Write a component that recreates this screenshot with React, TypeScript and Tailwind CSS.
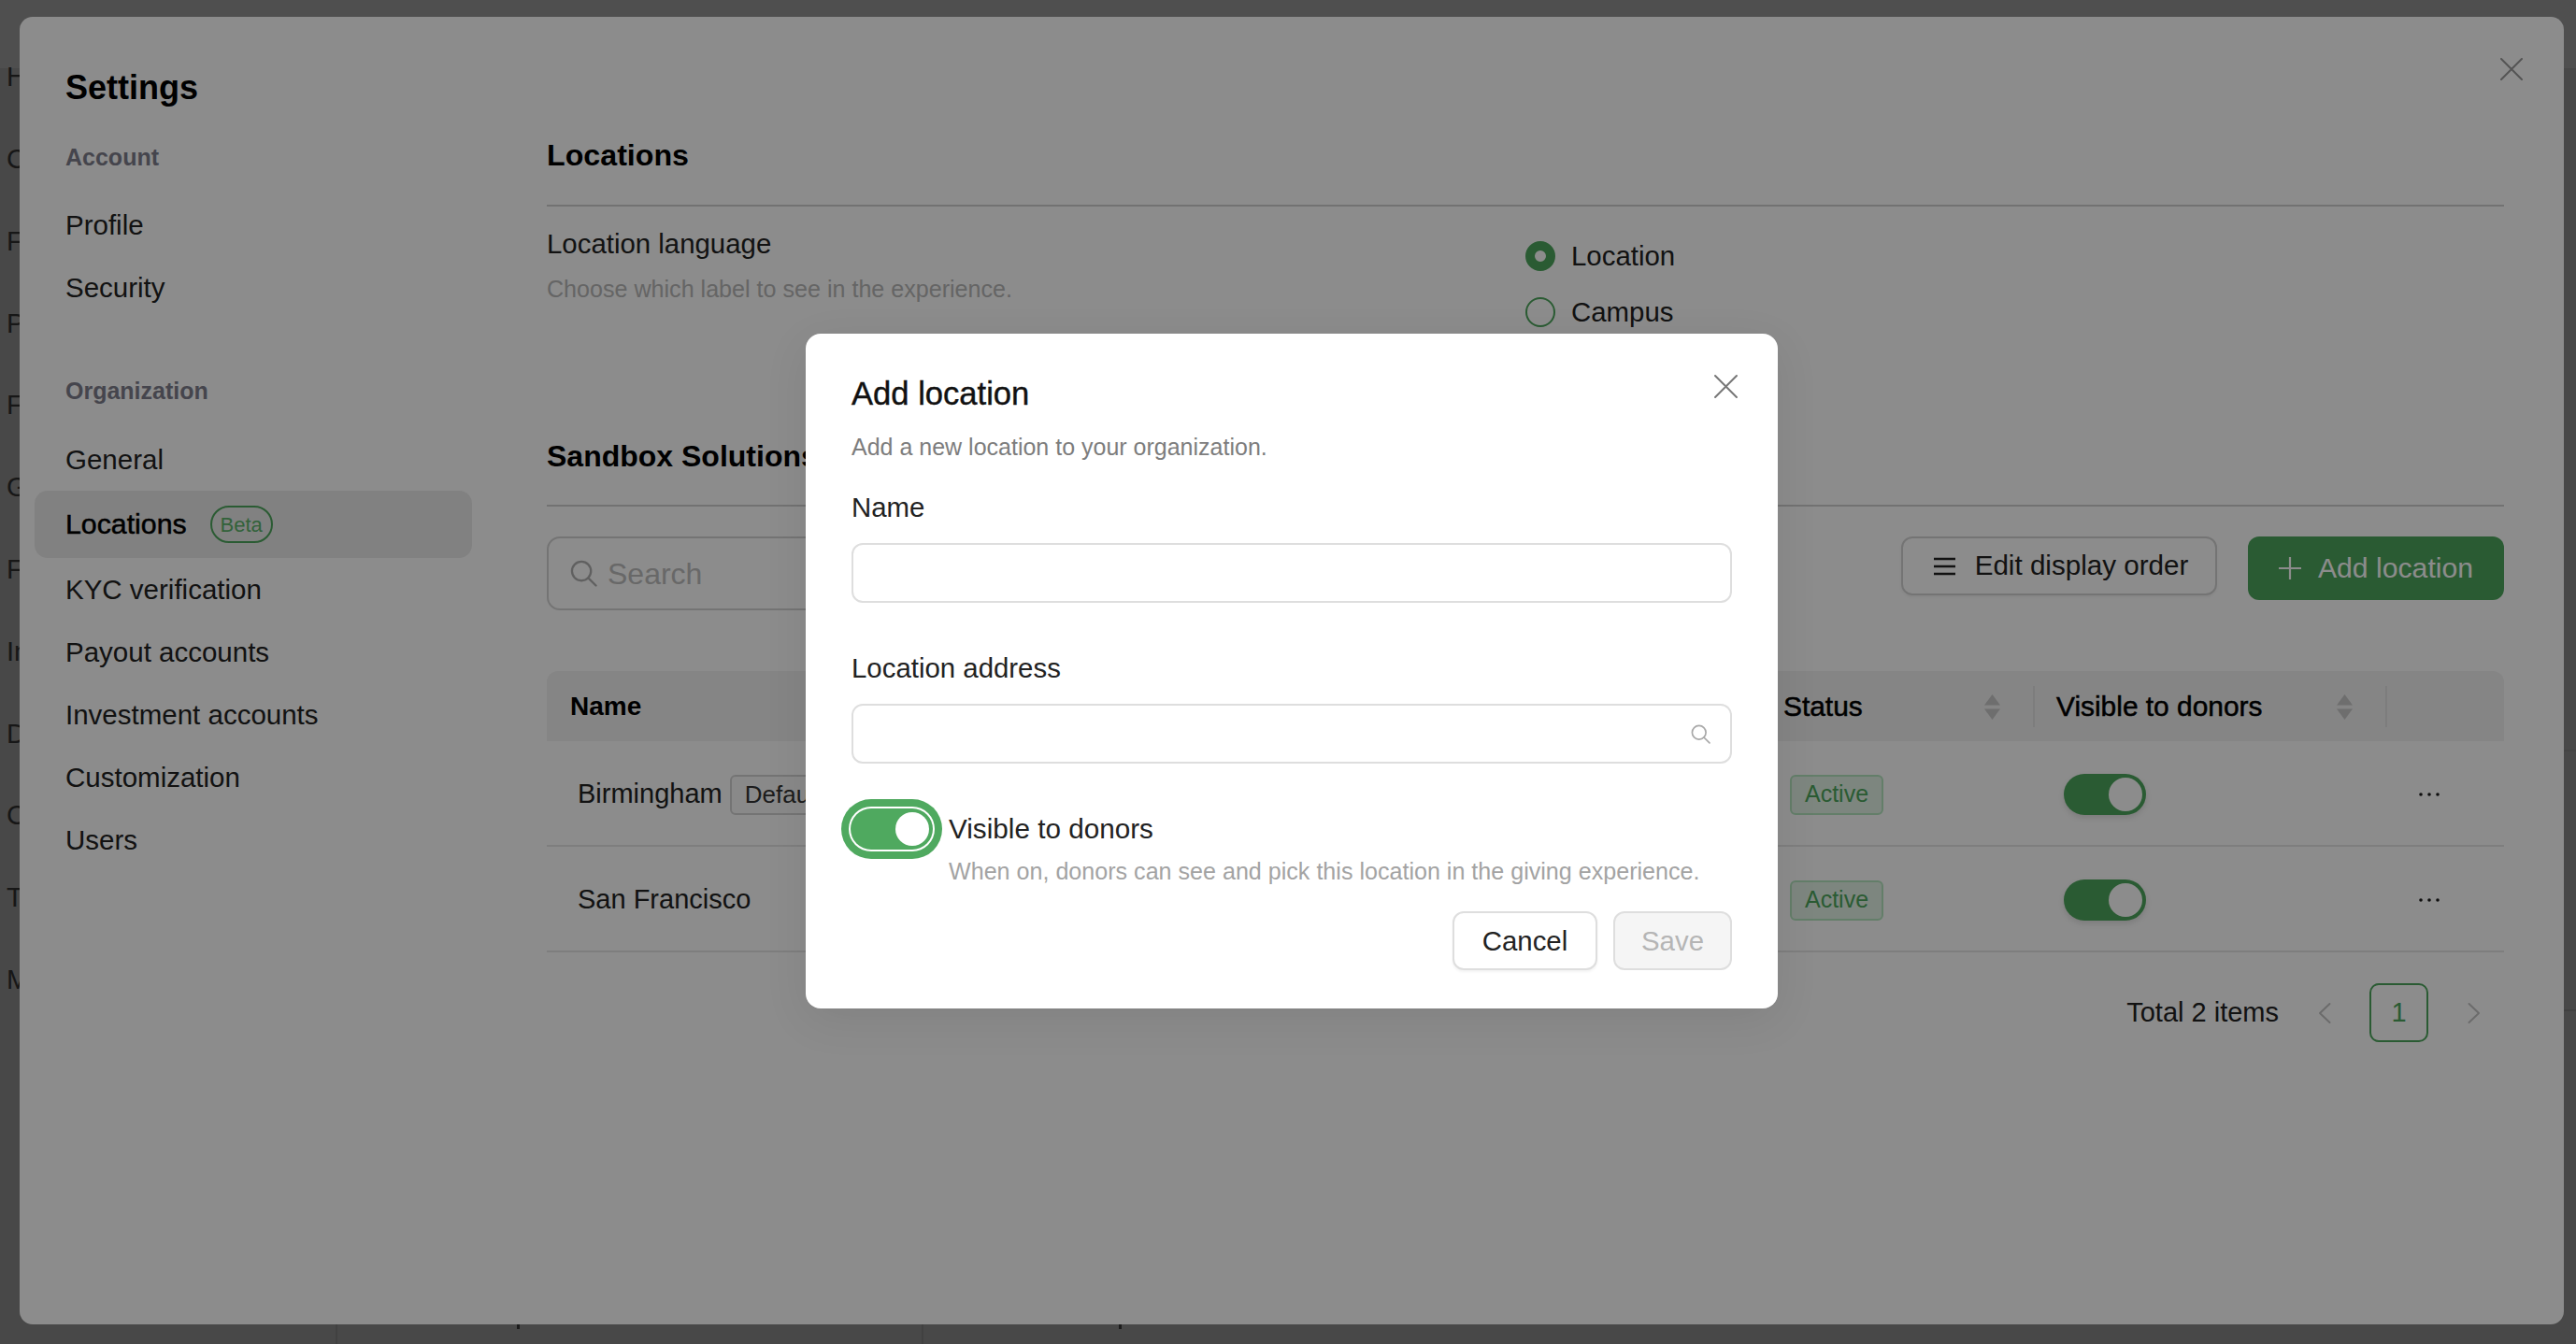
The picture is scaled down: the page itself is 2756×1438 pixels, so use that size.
import React from "react";

const F = "font-['Liberation_Sans',sans-serif]";

function Toggle() {
  return (
    <div className="flex h-[44px] w-[88px] items-center justify-end rounded-full bg-[#4ea75d] pr-[4px] shadow-[0_3px_6px_rgba(0,0,0,0.12)]">
      <div className="h-[36px] w-[36px] rounded-full bg-white" />
    </div>
  );
}

function Sort() {
  return (
    <svg width="17" height="27" viewBox="0 0 17 27" className="shrink-0">
      <path d="M8.5 0 L17 11.5 H0 Z" fill="#c8c8c8" />
      <path d="M8.5 27 L17 15.5 H0 Z" fill="#c8c8c8" />
    </svg>
  );
}

function SearchIcon({ size, color, sw }: { size: number; color: string; sw: number }) {
  return (
    <svg width={size} height={size} viewBox="0 0 30 30" fill="none" stroke={color} strokeWidth={sw} strokeLinecap="round">
      <circle cx="12.5" cy="12.5" r="10.5" />
      <path d="M20 20 L28.5 28.5" />
    </svg>
  );
}

function Cross({ size, color, sw }: { size: number; color: string; sw: number }) {
  return (
    <svg width={size} height={size} viewBox="0 0 24 24" fill="none" stroke={color} strokeWidth={sw} strokeLinecap="round">
      <path d="M1 1 L23 23 M23 1 L1 23" />
    </svg>
  );
}

function Dots() {
  return (
    <svg width="22" height="4" viewBox="0 0 22 4" fill="#1a1a1a">
      <circle cx="2" cy="2" r="1.8" />
      <circle cx="11" cy="2" r="1.8" />
      <circle cx="20" cy="2" r="1.8" />
    </svg>
  );
}

function Chevron({ dir }: { dir: "l" | "r" }) {
  return (
    <svg width="14" height="24" viewBox="0 0 14 24" fill="none" stroke="#c4c4c4" strokeWidth="2" strokeLinecap="round" strokeLinejoin="round">
      <path d={dir === "l" ? "M12.5 2 L2 12 L12.5 22" : "M1.5 2 L12 12 L1.5 22"} />
    </svg>
  );
}

const leftLetters = ["H", "C", "F", "P", "F", "G", "F", "In", "D", "C", "T", "M"];

function NavItem({ label, mt }: { label: string; mt: string }) {
  return <div className={`flex h-[40px] items-center text-[29.5px] text-[#222] ${mt}`}>{label}</div>;
}

function HeadCell({ label }: { label: string }) {
  return (
    <div className="flex h-full items-center justify-between pr-[35px]">
      <div className="flex items-center">
        <div className="h-[44px] w-[2px] bg-[#e4e4e4]" />
        <span className="ml-[23px] text-[29.9px] text-black [-webkit-text-stroke:0.5px_black]">{label}</span>
      </div>
      <Sort />
    </div>
  );
}

function Row({ name, tag }: { name: string; tag?: boolean }) {
  return (
    <div className="grid h-[113px] grid-cols-[1298px_292px_377px_127px] items-center border-b-2 border-[#e6e6e6] pt-[3px]">
      <div className="flex items-center pl-[33px] text-[29px] text-[#222]">
        <span>{name}</span>
        {tag && (
          <span className="ml-[8px] flex h-[43px] items-center rounded-[6px] border-2 border-[#d4d4d4] bg-[#fafafa] px-[14px] text-[26px] text-[#333]">
            Default
          </span>
        )}
      </div>
      <div className="pl-[32px]">
        <span className="flex h-[43px] w-[100px] items-center justify-center rounded-[6px] border-2 border-[#b4e6bf] bg-[#e4f5e7] text-[25px] text-[#4ea75d]">
          Active
        </span>
      </div>
      <div className="pl-[33px]">
        <Toggle />
      </div>
      <div className="flex justify-start pl-[36px]">
        <Dots />
      </div>
    </div>
  );
}

export default function App() {
  return (
    <div className={`relative h-[1438px] w-[2756px] overflow-hidden bg-[#838383] ${F}`}>
      {/* page behind */}
      <div className="absolute left-0 right-0 top-0 h-[73px] bg-[#909090]" />
      <div className="relative flex flex-col pl-[7px] pt-[39px]">
        {leftLetters.map((l, i) => (
          <div key={i} className="flex h-[87.8px] items-center text-[29px] text-[#2a2a2a]">
            {l}
          </div>
        ))}
      </div>
      <div className="absolute bottom-0 left-[359px] h-[21px] w-[2px] bg-[#777]" />
      <div className="absolute bottom-[16px] left-[553px] h-[5px] w-[3px] bg-[#333]" />
      <div className="absolute bottom-0 left-[986px] h-[21px] w-[2px] bg-[#777]" />
      <div className="absolute bottom-[16px] left-[1197px] h-[5px] w-[3px] bg-[#333]" />
      <div className="absolute left-[2743px] right-0 top-[1080px] h-[2px] bg-[#757575]" />
      <div className="absolute left-[2743px] right-0 top-[802px] h-[2px] bg-[#7c7c7c]" />

      {/* settings modal */}
      <div className="absolute left-[21px] top-[18px] flex h-[1399px] w-[2722px] rounded-[14px] bg-white">
        <div className="absolute right-[44px] top-[44px]">
          <Cross size={24} color="#9a9a9a" sw={2} />
        </div>
        {/* sidebar */}
        <div className="w-[564px] shrink-0 pl-[49px] pt-[53px]">
          <div className="flex h-[44px] items-center pt-[1px] text-[36px] font-bold text-black">Settings</div>
          <div className="mt-[37px] flex h-[34px] items-center text-[25px] font-bold text-[#7e7e8c]">Account</div>
          <NavItem label="Profile" mt="mt-[35px]" />
          <NavItem label="Security" mt="mt-[27px]" />
          <div className="mt-[74px] flex h-[34px] items-center text-[25px] font-bold text-[#7e7e8c]">Organization</div>
          <NavItem label="General" mt="mt-[36px]" />
          <div className="-ml-[33px] mt-[13px] flex h-[72px] w-[468px] items-center rounded-[14px] bg-[#ebebeb] pl-[33px]">
            <span className="text-[30.3px] text-black [-webkit-text-stroke:0.5px_black]">Locations</span>
            <span className="ml-[25px] flex h-[40px] w-[67px] items-center justify-center rounded-full border-2 border-[#4ea75d] text-[22px] text-[#5cb36b]">
              Beta
            </span>
          </div>
          <NavItem label="KYC verification" mt="mt-[14px]" />
          <NavItem label="Payout accounts" mt="mt-[27px]" />
          <NavItem label="Investment accounts" mt="mt-[27px]" />
          <NavItem label="Customization" mt="mt-[27px]" />
          <NavItem label="Users" mt="mt-[27px]" />
        </div>
        {/* main */}
        <div className="w-[2094px] shrink-0 pt-[128px]">
          <div className="flex h-[40px] items-center text-[32.2px] font-bold text-black">Locations</div>
          <div className="mt-[33px] h-[2px] bg-[#cfcfcf]" />
          <div className="flex h-[247px]">
            <div className="w-[1047px] shrink-0 pt-[20px]">
              <div className="flex h-[40px] items-center text-[29.4px] text-[#222]">Location language</div>
              <div className="mt-[12px] flex h-[34px] items-center text-[25.1px] text-[#b8b8b8]">
                Choose which label to see in the experience.
              </div>
            </div>
            <div className="flex flex-col gap-[28px] pt-[37px]">
              <div className="flex h-[32px] items-center">
                <div className="flex h-[32px] w-[32px] items-center justify-center rounded-full border-[10px] border-[#4ea75d] bg-white" />
                <span className="ml-[17px] pt-[1px] text-[29.4px] text-[#222]">Location</span>
              </div>
              <div className="flex h-[32px] items-center">
                <div className="h-[32px] w-[32px] rounded-full border-2 border-[#4ea75d]" />
                <span className="ml-[17px] pt-[1px] text-[29.4px] text-[#222]">Campus</span>
              </div>
            </div>
          </div>
          <div className="flex h-[40px] items-center text-[32px] font-bold text-black">Sandbox Solutions</div>
          <div className="mt-[32px] h-[2px] bg-[#cfcfcf]" />
          <div className="mt-[32px] flex items-start justify-between">
            <div className="flex h-[79px] w-[600px] items-center rounded-[14px] border-2 border-[#d4d4d4] pl-[23px]">
              <SearchIcon size={29} color="#b0b0b0" sw={2.4} />
              <span className="ml-[11px] text-[32px] text-[#bdbdbd]">Search</span>
            </div>
            <div className="flex items-start gap-[33px]">
              <div className="flex h-[63px] w-[338px] items-center justify-center rounded-[12px] border-2 border-[#d4d4d4] pl-[4px] shadow-[0_2px_3px_rgba(0,0,0,0.05)]">
                <svg width="23" height="20" viewBox="0 0 23 20" stroke="#222" strokeWidth="2.4" fill="none">
                  <path d="M0 2 H23 M0 10 H23 M0 18 H23" />
                </svg>
                <span className="ml-[21px] text-[29.6px] text-[#222]">Edit display order</span>
              </div>
              <div className="flex h-[68px] w-[274px] items-center justify-center rounded-[12px] bg-[#4ea75d]">
                <svg width="24" height="24" viewBox="0 0 24 24" stroke="#fff" strokeWidth="2.2" fill="none">
                  <path d="M12 0 V24 M0 12 H24" />
                </svg>
                <span className="ml-[18px] text-[30.2px] text-white">Add location</span>
              </div>
            </div>
          </div>
          {/* table */}
          <div className="mt-[65px] grid h-[75px] grid-cols-[1298px_292px_377px_127px] items-center rounded-t-[12px] bg-[#f2f2f2] pt-[1px]">
            <div className="pl-[25px] text-[28px] font-bold text-black">Name</div>
            <HeadCell label="Status" />
            <HeadCell label="Visible to donors" />
            <div className="flex h-full items-center">
              <div className="h-[44px] w-[2px] bg-[#e4e4e4]" />
            </div>
          </div>
          <Row name="Birmingham" tag />
          <Row name="San Francisco" />
          {/* pagination */}
          <div className="mt-[33px] flex items-center justify-end pr-[25px]">
            <span className="text-[29px] text-[#222]">Total 2 items</span>
            <div className="ml-[42px]">
              <Chevron dir="l" />
            </div>
            <div className="ml-[41px] flex h-[63px] w-[63px] items-center justify-center rounded-[10px] border-2 border-[#4ea75d] text-[29px] text-[#4ea75d]">
              1
            </div>
            <div className="ml-[42px]">
              <Chevron dir="r" />
            </div>
          </div>
        </div>
      </div>

      {/* scrim */}
      <div className="absolute inset-0 bg-black/45" />

      {/* dialog */}
      <div className="absolute left-[862px] top-[357px] h-[722px] w-[1040px] rounded-[16px] bg-white px-[49px] pt-[42px] shadow-[0_12px_48px_rgba(0,0,0,0.08)]">
        <div className="absolute right-[43px] top-[44px]">
          <Cross size={25} color="#777" sw={1.9} />
        </div>
        <div className="flex h-[44px] items-center pt-[1px] text-[34.6px] text-[#111] [-webkit-text-stroke:0.4px_#111]">Add location</div>
        <div className="mt-[19px] flex h-[34px] items-center text-[25px] text-[#7d7d7d]">
          Add a new location to your organization.
        </div>
        <div className="mt-[27px] flex h-[40px] items-center text-[29.4px] text-[#222]">Name</div>
        <div className="mt-[18px] h-[64px] rounded-[12px] border-2 border-[#dedede] bg-white" />
        <div className="mt-[50px] flex h-[40px] items-center text-[29.4px] text-[#222]">Location address</div>
        <div className="mt-[18px] flex h-[64px] items-center justify-end rounded-[12px] border-2 border-[#dedede] bg-white pr-[21px]">
          <SearchIcon size={21} color="#a8a8a8" sw={2.4} />
        </div>
        <div className="ml-[-1px] mt-[48px] flex h-[44px] items-center">
          <div className="flex h-[44px] w-[88px] items-center justify-end rounded-full bg-[#4fa95f] pr-[4px] shadow-[0_0_0_2px_#fff,0_0_0_10px_#4fa95f]">
            <div className="h-[36px] w-[36px] rounded-full bg-white" />
          </div>
          <span className="ml-[17px] text-[29.7px] text-[#222]">Visible to donors</span>
        </div>
        <div className="mt-[7px] flex h-[34px] items-center pl-[104px] text-[25.1px] text-[#a3a3a3]">
          When on, donors can see and pick this location in the giving experience.
        </div>
        <div className="mt-[25px] flex justify-end gap-[17px]">
          <div className="flex h-[63px] w-[155px] items-center justify-center rounded-[12px] border-2 border-[#dedede] bg-white pt-[2px] text-[29.4px] text-[#222] shadow-[0_2px_3px_rgba(0,0,0,0.05)]">
            Cancel
          </div>
          <div className="flex h-[63px] w-[127px] items-center justify-center rounded-[12px] border-2 border-[#dedede] bg-[#f5f5f5] pt-[2px] text-[29.4px] text-[#b5b5b5]">
            Save
          </div>
        </div>
      </div>
    </div>
  );
}
